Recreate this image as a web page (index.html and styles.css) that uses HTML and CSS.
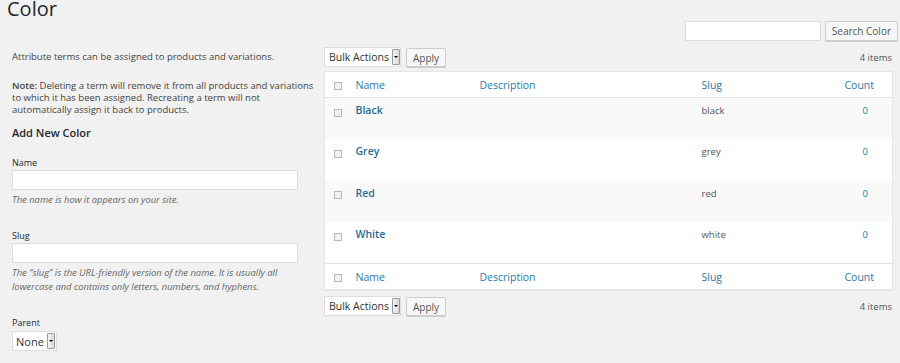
FILE: index.html
```html
<!DOCTYPE html>
<html lang="en">

<head>
  <meta charset="UTF-8" />
  <title>Color</title>
  <link rel="stylesheet" href="styles.css">
</head>

<body>
  <div class="wrap">
    <h1>Color</h1>

    <div class="search-box">
      <input type="search" class="search-input" />
      <button class="button">Search Color</button>
    </div>

    <div class="columns">
      <div class="col-left">
        <p class="intro">Attribute terms can be assigned to products and variations.</p>
        <p class="note"><strong>Note:</strong> Deleting a term will remove it from all products and variations to which it has been assigned. Recreating a term will not automatically assign it back to products.</p>

        <h2>Add New Color</h2>

        <div class="form-field">
          <label>Name</label>
          <input type="text" class="text-input" />
          <p class="hint">The name is how it appears on your site.</p>
        </div>

        <div class="form-field">
          <label>Slug</label>
          <input type="text" class="text-input" />
          <p class="hint">The “slug” is the URL-friendly version of the name. It is usually all lowercase and contains only letters, numbers, and hyphens.</p>
        </div>

        <div class="form-field">
          <label>Parent</label>
          <div class="fake-select parent-select">
            <span class="fake-select-text">None</span>
            <span class="fake-select-arrow"></span>
          </div>
        </div>
      </div>

      <div class="col-right">
        <div class="tablenav">
          <div class="fake-select">
            <span class="fake-select-text">Bulk Actions</span>
            <span class="fake-select-arrow"></span>
          </div>
          <button class="button apply">Apply</button>
          <span class="count-items">4 items</span>
        </div>

        <table class="terms">
          <colgroup>
            <col class="c-check" />
            <col class="c-name" />
            <col class="c-desc" />
            <col class="c-slug" />
            <col class="c-count" />
          </colgroup>
          <thead>
            <tr>
              <th><span class="cb"></span></th>
              <th><a>Name</a></th>
              <th><a>Description</a></th>
              <th><a>Slug</a></th>
              <th class="num"><a>Count</a></th>
            </tr>
          </thead>
          <tbody>
            <tr class="alt">
              <td><span class="cb"></span></td>
              <td class="term-name"><a>Black</a></td>
              <td></td>
              <td>black</td>
              <td class="num"><a>0</a></td>
            </tr>
            <tr>
              <td><span class="cb"></span></td>
              <td class="term-name"><a>Grey</a></td>
              <td></td>
              <td>grey</td>
              <td class="num"><a>0</a></td>
            </tr>
            <tr class="alt">
              <td><span class="cb"></span></td>
              <td class="term-name"><a>Red</a></td>
              <td></td>
              <td>red</td>
              <td class="num"><a>0</a></td>
            </tr>
            <tr>
              <td><span class="cb"></span></td>
              <td class="term-name"><a>White</a></td>
              <td></td>
              <td>white</td>
              <td class="num"><a>0</a></td>
            </tr>
          </tbody>
          <tfoot>
            <tr>
              <th><span class="cb"></span></th>
              <th><a>Name</a></th>
              <th><a>Description</a></th>
              <th><a>Slug</a></th>
              <th class="num"><a>Count</a></th>
            </tr>
          </tfoot>
        </table>

        <div class="tablenav bottom">
          <div class="fake-select">
            <span class="fake-select-text">Bulk Actions</span>
            <span class="fake-select-arrow"></span>
          </div>
          <button class="button apply">Apply</button>
          <span class="count-items">4 items</span>
        </div>
      </div>
    </div>
  </div>
</body>

</html>
```

FILE: styles.css
```css
* {
  box-sizing: border-box;
}

body {
  margin: 0;
  background: #f1f1f1;
  color: #444;
  font-family: "Open Sans", "Liberation Sans", sans-serif;
  font-size: 10px;
}

.wrap {
  padding: 0 2px 0 7px;
}

h1 {
  margin: 0;
  font-size: 20px;
  font-weight: 400;
  line-height: 18px;
  color: #23282d;
}

/* Search */
.search-box {
  display: flex;
  justify-content: flex-end;
  gap: 4px;
  margin-top: 3px;
}

.search-input {
  width: 136px;
  height: 20px;
  border: 1px solid #ddd;
  background: #fff;
  margin: 0;
}

.button {
  height: 20px;
  padding: 0 6px;
  font-family: inherit;
  font-size: 10px;
  color: #555;
  background: #f7f7f7;
  border: 1px solid #ccc;
  border-radius: 2px;
  box-shadow: 0 1px 0 #ccc;
  cursor: pointer;
  white-space: nowrap;
}

/* Columns */
.columns {
  display: flex;
}

.col-left {
  width: 303px;
  margin-left: 5px;
  padding-top: 10px;
}

.col-right {
  width: 568px;
  margin-left: 9px;
  padding-top: 6px;
}

.col-left p {
  margin: 0;
  line-height: 12px;
}

.intro {
  font-size: 9.5px;
}

.note {
  margin-top: 17px !important;
  font-size: 9.5px;
}

.note strong {
  font-weight: 600;
}

h2 {
  margin: 10px 0 0;
  font-size: 11px;
  font-weight: 600;
  line-height: 14px;
  color: #23282d;
}

.form-field {
  margin-top: 17px;
}

.form-field + .form-field {
  margin-top: 23px;
}

.form-field label {
  display: block;
  font-size: 9px;
  line-height: 12px;
  color: #23282d;
}

.text-input {
  display: block;
  width: 286px;
  height: 20px;
  margin: 1px 0 0;
  border: 1px solid #ddd;
  background: #fff;
}

.col-left .hint {
  margin-top: 3px;
  font-size: 9.4px;
  font-style: italic;
  line-height: 14px;
  color: #666;
}

/* Fake select */
.fake-select {
  display: inline-flex;
  align-items: center;
  flex-shrink: 0;
  height: 20px;
  background: #fff;
  border: 1px solid #ddd;
  padding-left: 4px;
  padding-right: 1px;
  gap: 3px;
  white-space: nowrap;
}

.fake-select-text {
  font-size: 10.5px;
  color: #333;
}

.fake-select-arrow {
  position: relative;
  flex-shrink: 0;
  width: 8px;
  height: 16px;
  border: 1px solid #999;
  border-radius: 1px;
  background: linear-gradient(to right, #f4f4f4, #d8d8d8);
}

.fake-select-arrow::after {
  content: "";
  position: absolute;
  left: 1px;
  top: 6px;
  border-left: 2px solid transparent;
  border-right: 2px solid transparent;
  border-top: 2px solid #000;
}

.parent-select {
  margin-top: 2px;
  padding-left: 3px;
}

.parent-select .fake-select-text {
  font-size: 11px;
}

/* Table nav */
.tablenav {
  display: flex;
  align-items: center;
  height: 20px;
  gap: 5px;
}

.tablenav .fake-select {
  width: 77px;
  justify-content: space-between;
}

.tablenav .apply {
  height: 19px;
  margin-top: 1px;
  padding: 0 6px;
}

.count-items {
  margin-left: auto;
  font-size: 9.5px;
  color: #555;
}

.tablenav.bottom {
  margin-top: 6px;
}

/* Terms table */
.terms {
  width: 568px;
  margin-top: 4px;
  border-collapse: collapse;
  table-layout: fixed;
  background: #fff;
  box-shadow: 0 1px 1px rgba(0, 0, 0, 0.04);
  border: 1px solid #e5e5e5;
}

.c-check { width: 24px; }
.c-name { width: 124px; }
.c-desc { width: 222px; }
.c-slug { width: 133px; }
.c-count { width: 65px; }

.terms th {
  height: 26px;
  padding: 0 0 0 7px;
  text-align: left;
  font-weight: 400;
  font-size: 10.5px;
}

.terms thead th {
  border-bottom: 1px solid #e1e1e1;
}

.terms tfoot th {
  border-top: 1px solid #e1e1e1;
}

.terms a {
  color: #2a7aa8;
}

.terms td {
  height: 41.5px;
  padding: 6px 0 0 7px;
  vertical-align: top;
  font-size: 9.5px;
  line-height: 13px;
  color: #555;
}

.terms tr.alt td {
  background: #f9f9f9;
}

.terms td.term-name {
  font-size: 10.5px;
  font-weight: 600;
}

.terms td.term-name a {
  color: #1f6c99;
}

.terms th.num {
  text-align: center;
  padding: 0 1px 0 0;
}

.terms td.num {
  text-align: center;
  padding-left: 11px;
  padding-right: 0;
}

.terms th:first-child,
.terms td:first-child {
  padding-left: 9px;
}

.cb {
  display: inline-block;
  width: 8px;
  height: 8px;
  border: 1px solid #b4b9be;
  background: #f2f2f2;
  vertical-align: middle;
}

.terms td .cb {
  margin-top: 3px;
}
```
